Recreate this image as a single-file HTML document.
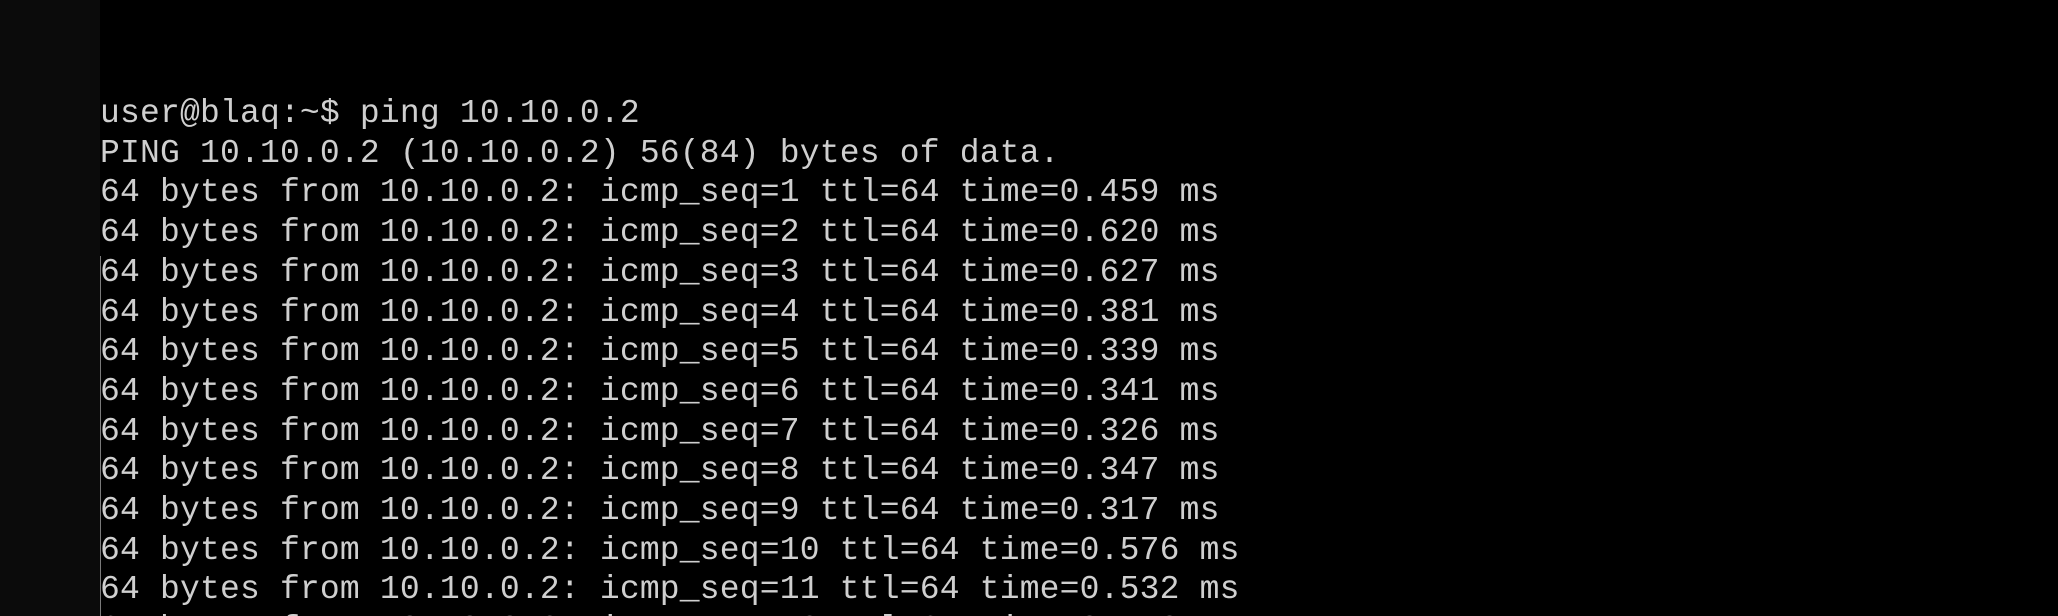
<!DOCTYPE html>
<html><head><meta charset="utf-8"><style>
html,body{margin:0;padding:0;background:#000;width:2058px;height:616px;overflow:hidden;position:relative}
#strip{position:absolute;left:0;top:0;width:100px;height:616px;background:#0b0b0b}
#bar{position:absolute;left:100px;top:256px;width:1px;height:360px;background:#7a7a7a}
pre{position:absolute;left:100px;top:94px;height:522px;overflow:hidden;margin:0;font-family:"Liberation Mono",monospace;font-size:33px;letter-spacing:0.19px;line-height:39.7px;color:#cfcfcf;white-space:pre}
</style></head><body>
<div id="strip"></div><div id="bar"></div>
<pre>user@blaq:~$ ping 10.10.0.2
PING 10.10.0.2 (10.10.0.2) 56(84) bytes of data.
64 bytes from 10.10.0.2: icmp_seq=1 ttl=64 time=0.459 ms
64 bytes from 10.10.0.2: icmp_seq=2 ttl=64 time=0.620 ms
64 bytes from 10.10.0.2: icmp_seq=3 ttl=64 time=0.627 ms
64 bytes from 10.10.0.2: icmp_seq=4 ttl=64 time=0.381 ms
64 bytes from 10.10.0.2: icmp_seq=5 ttl=64 time=0.339 ms
64 bytes from 10.10.0.2: icmp_seq=6 ttl=64 time=0.341 ms
64 bytes from 10.10.0.2: icmp_seq=7 ttl=64 time=0.326 ms
64 bytes from 10.10.0.2: icmp_seq=8 ttl=64 time=0.347 ms
64 bytes from 10.10.0.2: icmp_seq=9 ttl=64 time=0.317 ms
64 bytes from 10.10.0.2: icmp_seq=10 ttl=64 time=0.576 ms
64 bytes from 10.10.0.2: icmp_seq=11 ttl=64 time=0.532 ms
64 bytes from 10.10.0.2: icmp_seq=12 ttl=64 time=0.540 ms</pre>
</body></html>
